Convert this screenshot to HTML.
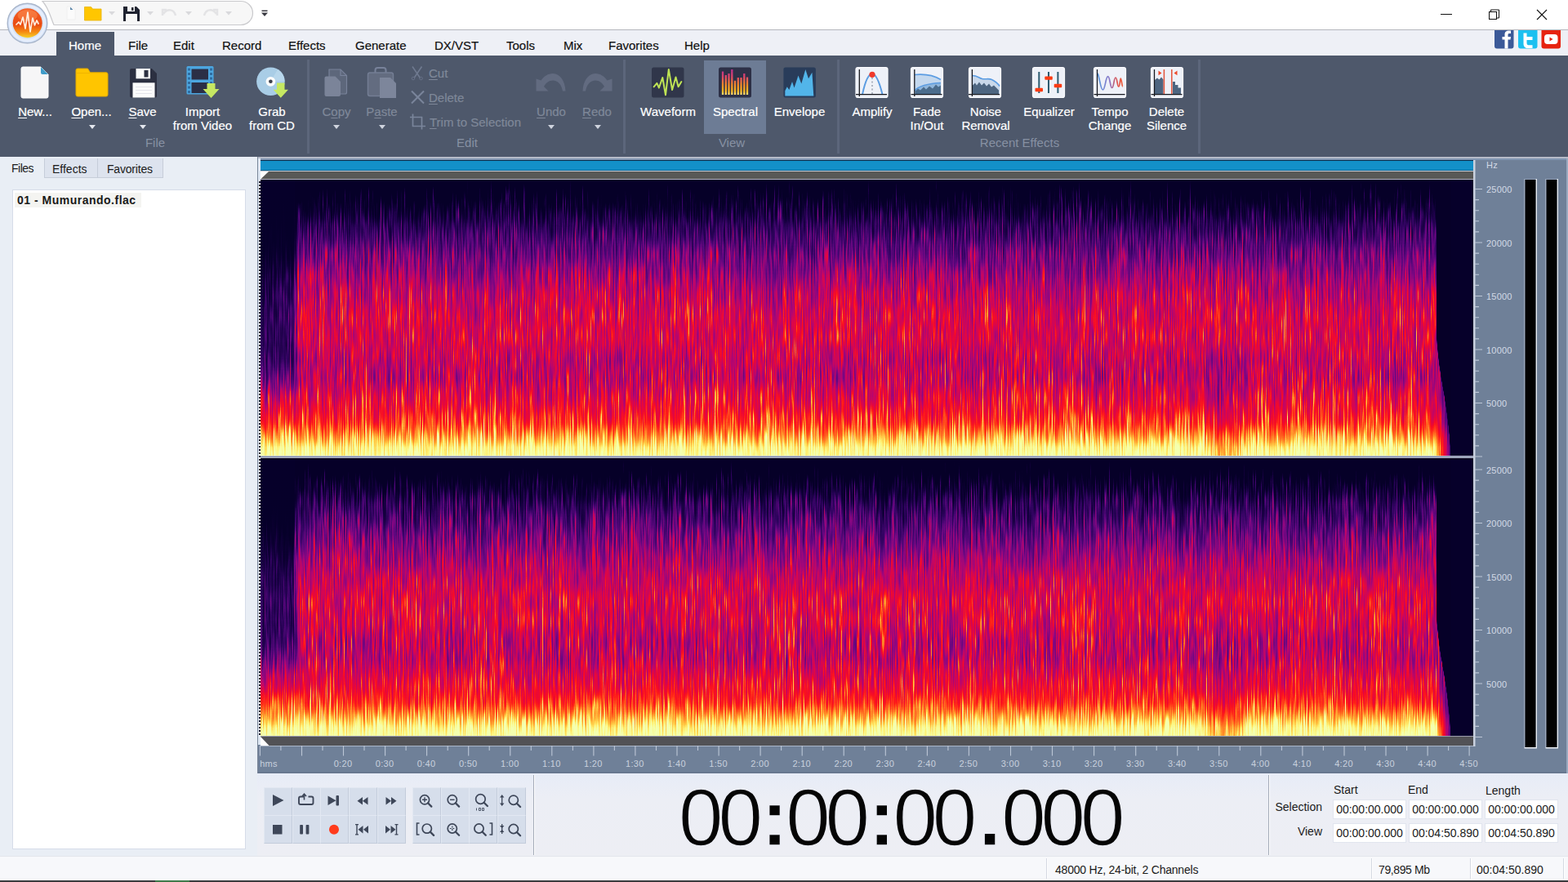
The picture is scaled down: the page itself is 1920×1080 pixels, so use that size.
<!DOCTYPE html>
<html lang="en">
<head>
<meta charset="utf-8">
<title>WavePad Sound Editor</title>
<style>
*{box-sizing:border-box;margin:0;padding:0}
html,body{width:1920px;height:1080px;overflow:hidden;background:#fff}
body{position:relative;font-family:"Liberation Sans",sans-serif;font-size:15px;color:#111}
.abs{position:absolute}
svg{position:absolute;overflow:visible}
/* title + tabs */
#titlebar{left:0;top:0;width:1920px;height:36px;background:#fff}
#titleline{left:0;top:36px;width:1920px;height:1px;background:#b4b6bc}
#tabrow{left:0;top:37px;width:1920px;height:31px;background:#eef0f6}
#hometab{left:69px;top:39px;width:71px;height:29px;background:#4e586b}
.tab{position:absolute;top:47px;-webkit-text-stroke:.2px currentColor;height:18px;line-height:18px;font-size:15px;color:#111;white-space:nowrap}
/* ribbon */
#ribbon{left:0;top:68px;width:1920px;height:124px;background:#4e586b}
.rl{position:absolute;-webkit-text-stroke:.2px currentColor;color:#fff;font-size:15px;line-height:18px;text-align:center;white-space:nowrap;transform:translateX(-50%)}
.rl.dis{color:#7f8899}
.rl u{text-decoration-thickness:1px;text-underline-offset:2px}
.grp{position:absolute;top:166px;color:#8791a3;font-size:15px;line-height:18px;white-space:nowrap;transform:translateX(-50%)}
.sep{position:absolute;top:73px;width:3px;height:115px;background:#5c667b}
.dd{position:absolute;width:0;height:0;border-left:4px solid transparent;border-right:4px solid transparent;border-top:5px solid #e4e7ee}
.dd.dis{border-top-color:#cfd4de}
/* left panel */
#leftpanel{left:0;top:192px;width:315px;height:856px;background:#e9eef5}
.ptab{position:absolute;top:194px;height:24px;background:#dde3ee;border:1px solid #c6cdd9;border-top:0}
.ptxt{position:absolute;font-size:14px;line-height:16px;color:#1a1a1a;white-space:nowrap}
#list{left:15px;top:232px;width:286px;height:808px;background:#fff;border:1px solid #d6dce8}
/* main */
#main{left:315px;top:192px;width:1605px;height:755px;background:#6f8098;border-bottom:2px solid #67778f}
.hz{position:absolute;left:1820px;font-size:11px;line-height:12px;color:#d3dae6;white-space:nowrap;letter-spacing:.2px}
.tl{position:absolute;top:929px;font-size:11px;line-height:12px;color:#c9d1de;white-space:nowrap;letter-spacing:.3px;transform:translateX(-50%)}
/* transport */
#transport{left:315px;top:947px;width:1605px;height:101px;background:linear-gradient(#e7ecf7,#eceef5 30%,#edeef4)}
.cell{position:absolute;width:35px;height:35px;background:#d6deeb;border:1px solid #c3ccdb;border-left-color:#e2e8f2;border-top-color:#e2e8f2}
#bigtime{left:831px;top:948px;width:560px;height:100px;font-size:98px;line-height:107px;color:#050505;white-space:nowrap;letter-spacing:-6.1px;-webkit-text-stroke:1.4px #ebedf5}
#bigtime .c{display:inline-block;width:34.4px;text-align:center;letter-spacing:0;font-weight:bold;position:relative;left:3.6px}
#bigtime .p{display:inline-block;width:36px;text-align:center;letter-spacing:0;font-weight:bold;position:relative;left:4px}
.tbl{position:absolute;font-size:14px;line-height:16px;color:#1a1a1a;white-space:nowrap}
.box{position:absolute;width:90px;height:24px;background:#fff;border:1px solid #e1e5ee;font-size:14px;line-height:23px;color:#1a1a1a;text-align:center;white-space:nowrap}
/* status */
#status{left:0;top:1048px;width:1920px;height:30px;background:#f7f8fb;border-top:1px solid #e3e6ec}
.st{position:absolute;top:1057px;font-size:14px;line-height:16px;color:#1a1a1a;white-space:nowrap}
.ssep{position:absolute;top:1051px;width:2px;height:25px;background:#fff;border-left:1px solid #d5d9e2}
#bottomline{left:0;top:1078px;width:1920px;height:2px;background:#3a3a3c}
</style>
</head>
<body>
<!-- ===== title bar ===== -->
<div id="titlebar" class="abs"></div>
<div id="titleline" class="abs"></div>
<div id="tabrow" class="abs"></div>
<div id="hometab" class="abs"></div>
<div class="tab" style="left:84px;color:#fff">Home</div>
<div class="tab" style="left:157px">File</div>
<div class="tab" style="left:212px">Edit</div>
<div class="tab" style="left:272px">Record</div>
<div class="tab" style="left:353px">Effects</div>
<div class="tab" style="left:435px">Generate</div>
<div class="tab" style="left:532px">DX/VST</div>
<div class="tab" style="left:620px">Tools</div>
<div class="tab" style="left:690px">Mix</div>
<div class="tab" style="left:745px">Favorites</div>
<div class="tab" style="left:838px">Help</div>
<!-- title bar icons -->
<svg width="1920" height="70" viewBox="0 0 1920 70" style="left:0;top:0">
<defs>
<radialGradient id="orb" cx="0.5" cy="0.35" r="0.75">
 <stop offset="0" stop-color="#ff8a3a"/><stop offset="0.45" stop-color="#ee4a14"/><stop offset="0.75" stop-color="#f06a10"/><stop offset="1" stop-color="#f8cc20"/>
</radialGradient>
<linearGradient id="orbg" x1="0" y1="0" x2="0" y2="1">
 <stop offset="0" stop-color="#f2622a"/><stop offset="0.55" stop-color="#ea4a12"/><stop offset="0.8" stop-color="#f58a14"/><stop offset="1" stop-color="#f6d028"/>
</linearGradient>
</defs>
<!-- quick access pill -->
<path d="M52 1.5H295a14.5 14.5 0 0 1 0 29H66C62 22 60 10 52 1.5Z" fill="#f7f7f7" stroke="#c9c9cc" stroke-width="1.2"/>
<!-- new (faint) -->
<path d="M82 8h6l4 4v12H82Z" fill="#fbfbfb" stroke="#f0f0f0"/><path d="M86 8.5l3.5 3.5h-3.5Z" fill="#5c86a8"/>
<!-- folder -->
<path d="M103.5 8.5h8l2 2.5h10.5v14h-20.500Z" fill="#ffc600" stroke="#e9b400" stroke-width=".8"/>
<path d="M133 14h8l-4 4.500Z" fill="#d9d9dc"/>
<!-- save -->
<path d="M151 8h16l4 4v14h-20Z" fill="#1e2230"/><rect x="156" y="8" width="9" height="6" fill="#f7f7f7"/><rect x="161" y="9" width="2.500" height="4" fill="#1e2230"/><rect x="154" y="17" width="14" height="9" fill="#f7f7f7"/>
<path d="M180 14h8l-4 4.500Z" fill="#d9d9dc"/>
<!-- undo / redo faint -->
<path d="M199 19v-7l5 0M200 17c5-7 13-6 15 2" fill="none" stroke="#e3e3e5" stroke-width="2.500"/>
<path d="M227 14h8l-4 4.500Z" fill="#d9d9dc"/>
<path d="M266 19v-7l-5 0M265 17c-5-7-13-6-15 2" fill="none" stroke="#e3e3e5" stroke-width="2.500"/>
<path d="M276 14h8l-4 4.500Z" fill="#d9d9dc"/>
<!-- customize -->
<rect x="320.500" y="12.500" width="7" height="1.500" fill="#3c3c44"/><path d="M320 15.500h8l-4 4.500Z" fill="#3c3c44"/>
<!-- orb -->
<circle cx="33.500" cy="28.500" r="24.300" fill="#d6e3f8" stroke="#a9b6cb" stroke-width="1.400"/>
<circle cx="33.500" cy="28.500" r="21" fill="none" stroke="#e6eefc" stroke-width="3"/>
<circle cx="33.700" cy="28.200" r="18" fill="url(#orbg)"/>
<ellipse cx="33.700" cy="19" rx="12" ry="7" fill="#ff9a5a" opacity=".45"/>
<path d="M20 30l3-3 2 3 3-9 3 14 3-20 3 24 3-17 2.500 9 2.500-6 2 4" fill="none" stroke="#fff6e8" stroke-width="1.700" stroke-linejoin="round" stroke-linecap="round" opacity=".95"/>
<!-- window buttons -->
<rect x="1764" y="17" width="14" height="1" fill="#111"/>
<rect x="1823.500" y="14.500" width="9" height="9" fill="none" stroke="#111" stroke-width="1"/>
<path d="M1825.500 14.500v-2.500h10v10h-3" fill="none" stroke="#111" stroke-width="1"/>
<path d="M1882 12l12 12M1894 12l-12 12" stroke="#111" stroke-width="1.100" fill="none"/>
<!-- social -->
<path d="M1830 37h23.500v19.500a3 3 0 0 1-3 3h-17.500a3 3 0 0 1-3-3Z" fill="#3b5998"/>
<path d="M1842.500 59.500v-11h-3v-3.500h3v-2.500c0-3.600 2-5 5-5h2.500v3.500h-1.800c-1.300 0-1.700.6-1.700 1.700v2.300h3.500l-.5 3.500h-3v11Z" fill="#fff"/>
<path d="M1859 37h23.500v19.500a3 3 0 0 1-3 3h-17.500a3 3 0 0 1-3-3Z" fill="#1cc0f0"/>
<path d="M1865.500 40.500h4v4.500h7v4h-7v3.500c0 2 1 2.800 3 2.800h4v3.700h-5.500c-3.700 0-5.500-2-5.500-5.500Z" fill="#fff"/>
<path d="M1887.500 37h23.500v19.500a3 3 0 0 1-3 3h-17.500a3 3 0 0 1-3-3Z" fill="#e62310"/>
<rect x="1891" y="42" width="16.500" height="12" rx="4" fill="#fff"/>
<path d="M1897.500 45.500l4 2.500-4 2.500Z" fill="#e62310"/>
</svg>
<!-- ===== ribbon ===== -->
<div id="ribbon" class="abs"></div>
<div class="abs" style="left:862px;top:74px;width:76px;height:90px;background:#6d7c95"></div>
<div class="sep" style="left:376px"></div>
<div class="sep" style="left:763px"></div>
<div class="sep" style="left:1025px"></div>
<div class="sep" style="left:1467px"></div>

<div class="rl" style="left:43px;top:128px"><u>N</u>ew...</div>
<div class="rl" style="left:112px;top:128px"><u>O</u>pen...</div>
<div class="rl" style="left:174.5px;top:128px"><u>S</u>ave</div>
<div class="rl" style="left:248px;top:128px;line-height:17px">Import<br>from Video</div>
<div class="rl" style="left:333px;top:128px;line-height:17px">Grab<br>from CD</div>
<div class="dd" style="left:109px;top:153px"></div>
<div class="dd" style="left:171px;top:153px"></div>
<div class="grp" style="left:190px">File</div>

<div class="rl dis" style="left:412px;top:128px">C<u>o</u>py</div>
<div class="rl dis" style="left:467.5px;top:128px">P<u>a</u>ste</div>
<div class="dd dis" style="left:408px;top:153px"></div>
<div class="dd dis" style="left:464px;top:153px"></div>
<div class="rl dis" style="left:525px;top:81px;transform:none"><u>C</u>ut</div>
<div class="rl dis" style="left:525px;top:111px;transform:none"><u>D</u>elete</div>
<div class="rl dis" style="left:526px;top:141px;transform:none"><u>T</u>rim to Selection</div>
<div class="rl dis" style="left:675px;top:128px"><u>U</u>ndo</div>
<div class="rl dis" style="left:731px;top:128px"><u>R</u>edo</div>
<div class="dd dis" style="left:671px;top:153px"></div>
<div class="dd dis" style="left:728px;top:153px"></div>
<div class="grp" style="left:572px">Edit</div>

<div class="rl" style="left:818px;top:128px">Waveform</div>
<div class="rl" style="left:900.5px;top:128px">Spectral</div>
<div class="rl" style="left:979px;top:128px">Envelope</div>
<div class="grp" style="left:896px">View</div>

<div class="rl" style="left:1068px;top:128px">Amplify</div>
<div class="rl" style="left:1135px;top:128px;line-height:17px">Fade<br>In/Out</div>
<div class="rl" style="left:1207px;top:128px;line-height:17px">Noise<br>Removal</div>
<div class="rl" style="left:1284.5px;top:128px">Equalizer</div>
<div class="rl" style="left:1359px;top:128px;line-height:17px">Tempo<br>Change</div>
<div class="rl" style="left:1428.5px;top:128px;line-height:17px">Delete<br>Silence</div>
<div class="grp" style="left:1248.5px">Recent Effects</div>
<!-- ribbon icons -->
<svg width="1920" height="124" viewBox="0 68 1920 124" style="left:0;top:68px">
<defs>
<linearGradient id="barg" x1="0" y1="85" x2="0" y2="116" gradientUnits="userSpaceOnUse">
 <stop offset="0" stop-color="#b92f8f"/><stop offset="0.3" stop-color="#e04868"/><stop offset="0.6" stop-color="#f58a2a"/><stop offset="0.85" stop-color="#fdb81e"/><stop offset="1" stop-color="#ffe47a"/>
</linearGradient>
<linearGradient id="tempog" x1="1344" y1="0" x2="1376" y2="0" gradientUnits="userSpaceOnUse">
 <stop offset="0" stop-color="#5a9be0"/><stop offset="0.45" stop-color="#8a78c8"/><stop offset="0.75" stop-color="#e0504a"/><stop offset="1" stop-color="#f0643c"/>
</linearGradient>
</defs>
<!-- New -->
<path d="M28 82h22l9 9v27a2 2 0 0 1-2 2H28a2 2 0 0 1-2-2V84a2 2 0 0 1 2-2Z" fill="#f6f6f7" stroke="#fff" stroke-width="1"/>
<path d="M50 82l9 9h-7a2 2 0 0 1-2-2Z" fill="#3f9cc9"/>
<!-- Open -->
<path d="M95 84h12.500l3 4.800H130a2 2 0 0 1 2 2V116a2 2 0 0 1-2 2H95a2 2 0 0 1-2-2V86a2 2 0 0 1 2-2Z" fill="#ffc500" stroke="#e2a900" stroke-width="1"/>
<path d="M94 89.500h16" stroke="#f0b400" stroke-width="1" fill="none"/>
<!-- Save -->
<path d="M161 84h25l6 6v27.500a2 2 0 0 1-2 2H161a2 2 0 0 1-2-2V86a2 2 0 0 1 2-2Z" fill="#2c3041"/>
<rect x="166.500" y="84" width="17.500" height="12.300" fill="#fbfbfb"/><rect x="176.500" y="86" width="5" height="8.500" fill="#2c3041"/>
<rect x="162.500" y="101.300" width="27" height="18.200" fill="#fbfbfb"/>
<path d="M166 106.500h20M166 110.500h20M166 114.500h20" stroke="#e4e4ea" stroke-width="1"/>
<!-- Import from video -->
<rect x="228.500" y="81" width="33" height="34.500" rx="1.500" fill="#4ca6e0"/>
<rect x="234.500" y="84.500" width="20.500" height="13" fill="#2b2f46"/><rect x="234.500" y="101" width="20.500" height="13" fill="#2b2f46"/>
<g fill="#2f6ea3"><rect x="230" y="83.500" width="3" height="3"/><rect x="230" y="89" width="3" height="3"/><rect x="230" y="94.500" width="3" height="3"/><rect x="230" y="100" width="3" height="3"/><rect x="230" y="105.500" width="3" height="3"/><rect x="230" y="111" width="3" height="3"/>
<rect x="257" y="83.500" width="3" height="3"/><rect x="257" y="89" width="3" height="3"/><rect x="257" y="94.500" width="3" height="3"/><rect x="257" y="100" width="3" height="3"/></g>
<path d="M253.500 102h10v7h5l-10 11-10-11h5Z" fill="#c6e862"/>
<!-- Grab from CD -->
<circle cx="331.400" cy="99.800" r="17.300" fill="#a9cde6"/>
<path d="M331.400 99.800L348.700 99.800A17.300 17.300 0 0 0 340 85Z" fill="#bcd9ee" opacity=".8"/>
<circle cx="331.400" cy="99.800" r="5.900" fill="#fdfdfd"/><circle cx="331.400" cy="99.800" r="2.300" fill="#3b3f4c"/>
<path d="M339 101.500h9.500v8.300h4.500l-9.200 10-9.200-10h4.400Z" fill="#c6e862"/>
<!-- Copy (disabled) -->
<path d="M403 85h14l7.500 7.500v20.500a2 2 0 0 1-2 2H403Z" fill="#5d677b" stroke="#78829a" stroke-width="1.200"/>
<path d="M417 85v7.500h7.500" fill="none" stroke="#78829a" stroke-width="1.200"/>
<path d="M399.500 93.500h11l6.500 6.500v16a2 2 0 0 1-2 2h-15.500a2 2 0 0 1-2-2V95.500a2 2 0 0 1 2-2Z" fill="#7b8499"/>
<!-- Paste (disabled) -->
<path d="M459.500 89v-3a3 3 0 0 1 3-3h7a3 3 0 0 1 3 3v3" fill="none" stroke="#78829a" stroke-width="2"/>
<rect x="450.500" y="89" width="31" height="28.500" rx="2.500" fill="#636c80" stroke="#747e94" stroke-width="1.400"/>
<path d="M465 95h13l7 7v18h-20Z" fill="#7d869b"/>
<!-- Cut -->
<path d="M505 81.500l9.500 14M516.500 81.500l-9.500 14" stroke="#6f7a90" stroke-width="1.600" fill="none"/>
<circle cx="506" cy="96" r="1.800" fill="none" stroke="#667087" stroke-width="1"/><circle cx="515.500" cy="96" r="1.800" fill="none" stroke="#667087" stroke-width="1"/>
<!-- Delete -->
<path d="M504 111.500l15 15M519 111.500l-15 15" stroke="#7a859b" stroke-width="2" fill="none"/>
<!-- Trim -->
<path d="M505.500 139.500v15h15.500M502 143.500h14.500v15" stroke="#7a859b" stroke-width="1.700" fill="none"/>
<!-- Undo / Redo -->
<g fill="#636d82">
<path d="M656.500 96.500v15h15l-5.500-5.500c2-4 6-7.500 11-7.500 6 0 10.500 5 12 13h3.500c-.5-12-6.500-21.500-15.500-21.500-6 0-11 3.500-14.500 8.500Z" opacity=".95"/>
<path d="M749.500 96.500v15h-15l5.500-5.500c-2-4-6-7.500-11-7.500-6 0-10.500 5-12 13h-3.500c.5-12 6.500-21.500 15.500-21.500 6 0 11 3.500 14.500 8.500Z" opacity=".95"/>
</g>
<!-- Waveform -->
<rect x="798" y="82.500" width="39.500" height="37" rx="2.500" fill="#30364a"/>
<path d="M800.600 106.300l3.800-4.400 2.500 5.600 4.400-12.500 3.700 21.300 3.800-31.300 4.300 25 4.400-15.600 3.100 11.900 3.800-6.300" fill="none" stroke="#bfe455" stroke-width="2" stroke-linejoin="round" stroke-linecap="round"/>
<!-- Spectral -->
<rect x="880" y="82.500" width="40" height="37" rx="2.500" fill="#2d3047"/>
<path d="M885 87.500V116M888.800 92V116M892.500 90V116M896.300 85V116M900 98.800V116M903.800 95V116M907.500 95V116M911.300 90V116M915 94.400V116" stroke="url(#barg)" stroke-width="2.300" fill="none"/>
<!-- Envelope -->
<rect x="959.400" y="82.500" width="39.500" height="37" rx="2.500" fill="#293c5a"/>
<path d="M961.300 117.500v-6.300l2.500-5 2.500 3.800 3.700-10 2.500 7.500 5-15 3.800 10 5-17.500 3.700 11.300 4.400-7.500 1.900 28.700Z" fill="#52b5ea"/>
<!-- effect tiles -->
<g fill="#eef1f8" stroke="#fbfcff" stroke-width="1.200">
<rect x="1048" y="82.500" width="39" height="37" rx="2.500"/><rect x="1115.500" y="82.500" width="39" height="37" rx="2.500"/><rect x="1186.500" y="82.500" width="39" height="37" rx="2.500"/><rect x="1264.500" y="82.500" width="39" height="37" rx="2.500"/><rect x="1339.500" y="82.500" width="39" height="37" rx="2.500"/><rect x="1409.500" y="82.500" width="39" height="37" rx="2.500"/>
</g>
<!-- Amplify -->
<path d="M1056 115.500c3-14 7-25 12-25s9 11 12.500 25" fill="none" stroke="#5b9ce2" stroke-width="2"/>
<path d="M1068 95v20" stroke="#9aa3b0" stroke-width="1.500" stroke-dasharray="2 2.500" fill="none"/>
<circle cx="1068" cy="91.300" r="3.600" fill="#f0392b"/>
<path d="M1052.300 85v33M1048 115.600h38" stroke="#16181e" stroke-width="1.300" fill="none"/>
<!-- Fade -->
<path d="M1120 92c10-1 22 0 32 6v17.500h-32Z" fill="#c4d8ee"/>
<path d="M1120 111c4-5 16-9 32-9.500v14h-32Z" fill="#8fb6dc"/>
<path d="M1121 115.500v-4l3-3 3 2 4-4 3 3 4-4 4 3 4-5 3 3 3-2v11Z" fill="#4b6c8c"/>
<path d="M1120 91.500c10-1 22 0 32 6M1120 111c4-5 16-9 32-9.500" fill="none" stroke="#5b9ce2" stroke-width="1.600"/>
<path d="M1119.800 85v33M1115.500 115.600h38" stroke="#16181e" stroke-width="1.300" fill="none"/>
<!-- Noise removal -->
<path d="M1190.500 92.500c6 0 8 3 12 4s8-1 12 1 7 4 9.500 8v10h-33.500Z" fill="#c9d8ea"/>
<path d="M1191 115.500v-11l3-3 2 3 3-4 3 4 3-3 3 4 3-3 3 4 3-2 3 3 3 3v5.500Z" fill="#4d6580"/>
<path d="M1190.500 92.500c6 0 8 3 12 4s8-1 12 1 7 4 9.500 8" fill="none" stroke="#5b9ce2" stroke-width="1.600"/>
<path d="M1190.400 85v33M1186 115.600h38" stroke="#16181e" stroke-width="1.300" fill="none"/>
<!-- Equalizer -->
<path d="M1272.300 88v26M1284 88v26M1295.400 88v26" stroke="#2d5b70" stroke-width="2" fill="none"/>
<g fill="#fb3b12"><rect x="1267.500" y="107.800" width="9.500" height="4.400" rx="1"/><rect x="1279.300" y="93.400" width="9.500" height="4.400" rx="1"/><rect x="1290.700" y="102.800" width="9.500" height="4.400" rx="1"/></g>
<!-- Tempo -->
<path d="M1344 90c2.500 4 3.500 20 6.400 20s3.500-16.300 6.200-16.300 2.700 13.800 5 13.800 2.300-12.500 4.400-12.500 2 11 3.800 11 1.500-10 2.500-10 1.500 10 2.500 10" fill="none" stroke="url(#tempog)" stroke-width="1.700"/>
<path d="M1343.500 85v33M1339.500 115.600h38" stroke="#16181e" stroke-width="1.300" fill="none"/>
<!-- Delete silence -->
<path d="M1414 115.500V98l3-2.500 2.500 2 2.500-3 2.500 3v18Z" fill="#4d6580"/>
<path d="M1436 115.500V100h3v4h3.500v3.500H1446v8Z" fill="#4d6580"/>
<path d="M1425.400 85v30.500M1434.800 85v30.500" stroke="#e2543c" stroke-width="1.500" fill="none"/>
<path d="M1418.500 86.500l4 2.900-4 2.900ZM1441.500 86.500l-4 2.900 4 2.900Z" fill="#ee4a2a"/>
<path d="M1413.500 85v33M1409.500 115.600h38" stroke="#16181e" stroke-width="1.300" fill="none"/>
</svg>
<!-- ===== left panel ===== -->
<div id="leftpanel" class="abs"></div>
<div class="ptab" style="left:54px;width:66px"></div>
<div class="ptab" style="left:119px;width:81px"></div>
<div class="ptxt" style="left:14px;top:198px;letter-spacing:-.5px">Files</div>
<div class="ptxt" style="left:64px;top:199px">Effects</div>
<div class="ptxt" style="left:131px;top:199px;letter-spacing:-.2px">Favorites</div>
<div id="list" class="abs"></div>
<div class="abs" style="left:18px;top:236px;width:155px;height:18px;background:#f4f4f1"></div>
<div class="ptxt" style="left:21px;top:237px;font-weight:bold;font-size:14px;letter-spacing:.5px">01 - Mumurando.flac</div>
<!-- ===== main wave area ===== -->
<div id="main" class="abs"></div>
<div class="abs" style="left:0;top:192px;width:1920px;height:2px;background:#b6bbc8"></div>
<div class="abs" style="left:0;top:192px;width:315px;height:2px;background:#e9eef5"></div>
<div class="abs" style="left:315px;top:194px;width:1605px;height:2px;background:#8196b2"></div>
<div class="abs" style="left:1918px;top:194px;width:2px;height:754px;background:#9aaac0"></div>
<div class="abs" style="left:315px;top:192px;width:1px;height:756px;background:#7a8699"></div>
<div class="abs" style="left:316px;top:194px;width:3px;height:718px;background:#dfe8f4"></div>
<div class="abs" style="left:319px;top:196px;width:1485px;height:13px;background:#1390c9;border-top:1px solid #042c4e;border-bottom:1px solid #0b6797"></div>
<div class="abs" style="left:319px;top:209px;width:1485px;height:11px;background:#585856;border-top:1px solid #c6c8d0;border-bottom:1px solid #b4b6c2"></div>
<div class="abs" style="left:319px;top:901px;width:1485px;height:12px;background:#525256;border-top:1px solid #9a9cac"></div>
<div class="abs" style="left:317px;top:220px;width:2px;height:681px;background:repeating-linear-gradient(#fff 0 2px,#1a1a2a 2px 4px)"></div>
<svg width="1485" height="681" viewBox="319 220 1485 681" style="left:319px;top:220px;overflow:hidden">
<defs>
<linearGradient id="vp" x1="0" y1="0" x2="0" y2="1">
<stop offset="0.0" stop-color="#008000"/>
<stop offset="0.04" stop-color="#1f7d00"/>
<stop offset="0.09" stop-color="#3f7b00"/>
<stop offset="0.16" stop-color="#5c7700"/>
<stop offset="0.2" stop-color="#677500"/>
<stop offset="0.25" stop-color="#747500"/>
<stop offset="0.33" stop-color="#877500"/>
<stop offset="0.35" stop-color="#8c7500"/>
<stop offset="0.41" stop-color="#997d00"/>
<stop offset="0.5" stop-color="#a58a00"/>
<stop offset="0.58" stop-color="#a58c00"/>
<stop offset="0.66" stop-color="#998d00"/>
<stop offset="0.72" stop-color="#998f00"/>
<stop offset="0.78" stop-color="#a78800"/>
<stop offset="0.84" stop-color="#b48100"/>
<stop offset="0.85" stop-color="#b88000"/>
<stop offset="0.88" stop-color="#c27900"/>
<stop offset="0.91" stop-color="#d47200"/>
<stop offset="0.94" stop-color="#e76b00"/>
<stop offset="0.97" stop-color="#f95c00"/>
<stop offset="1.0" stop-color="#ff4c00"/>
</linearGradient>
<linearGradient id="fin" x1="0" y1="0" x2="0" y2="1"><stop offset="0" stop-color="#000" stop-opacity=".45"/><stop offset="0.6" stop-color="#000" stop-opacity=".42"/><stop offset="0.7" stop-color="#000" stop-opacity=".26"/><stop offset="0.78" stop-color="#000" stop-opacity=".1"/><stop offset="0.86" stop-color="#000" stop-opacity="0"/></linearGradient>
<linearGradient id="ftop" x1="0" y1="0" x2="0" y2="1"><stop offset="0" stop-color="#06002a" stop-opacity="1"/><stop offset="0.6" stop-color="#06002a" stop-opacity=".85"/><stop offset="1" stop-color="#06002a" stop-opacity="0"/></linearGradient>
<linearGradient id="fout" x1="0" y1="0" x2="1" y2="0"><stop offset="0" stop-color="#000" stop-opacity=".05"/><stop offset="0.5" stop-color="#000" stop-opacity=".28"/><stop offset="1" stop-color="#000" stop-opacity=".6"/></linearGradient>
<radialGradient id="dip" cx="0.5" cy="0.5" r="0.5"><stop offset="0" stop-color="#000" stop-opacity=".12"/><stop offset="0.5" stop-color="#000" stop-opacity=".08"/><stop offset="1" stop-color="#000" stop-opacity="0"/></radialGradient>
<filter id="spec" filterUnits="userSpaceOnUse" x="319" y="220" width="1485" height="681" color-interpolation-filters="sRGB">
 <feTurbulence type="fractalNoise" baseFrequency="0.7 0.007" numOctaves="2" seed="7" result="n1"/>
 <feColorMatrix in="n1" type="matrix" values="1 0 0 0 0  1 0 0 0 0  1 0 0 0 0  0 0 0 0 1" result="g1"/>
 <feTurbulence type="fractalNoise" baseFrequency="0.05 0.010" numOctaves="2" seed="23" result="n2"/>
 <feColorMatrix in="n2" type="matrix" values="0 1 0 0 0  0 1 0 0 0  0 1 0 0 0  0 0 0 0 1" result="g2"/>
 <feTurbulence type="fractalNoise" baseFrequency="0.65 0.04" numOctaves="1" seed="41" result="n3"/>
 <feColorMatrix in="n3" type="matrix" values="0 0 1 0 0  0 0 1 0 0  0 0 1 0 0  0 0 0 0 1" result="g3"/>
 <feComposite in="g1" in2="g2" operator="arithmetic" k1="0" k2="0.46" k3="0.12" k4="0" result="g12"/>
 <feComposite in="g12" in2="g3" operator="arithmetic" k1="0" k2="1" k3="0.42" k4="0" result="g0"/>
 <feComponentTransfer in="g0" result="g"><feFuncR type="gamma" amplitude="3.2" exponent="3.0" offset="0"/><feFuncG type="gamma" amplitude="3.2" exponent="3.0" offset="0"/><feFuncB type="gamma" amplitude="3.2" exponent="3.0" offset="0"/></feComponentTransfer>
 <feColorMatrix in="SourceGraphic" type="matrix" values="1 0 0 0 0  1 0 0 0 0  1 0 0 0 0  0 0 0 0 1" result="base"/>
 <feColorMatrix in="SourceGraphic" type="matrix" values="0 1 0 0 0  0 1 0 0 0  0 1 0 0 0  0 0 0 0 1" result="amp"/>
 <feComposite in="amp" in2="g" operator="arithmetic" k1="1" k2="-0.4200" k3="0" k4="0.5" result="t"/>
 <feComposite in="base" in2="t" operator="arithmetic" k1="0" k2="1.3000" k3="1" k4="-0.8000" result="sum"/>
 <feComponentTransfer in="sum">
  <feFuncR type="table" tableValues="0.024 0.037 0.051 0.065 0.078 0.110 0.141 0.173 0.204 0.247 0.290 0.333 0.376 0.430 0.484 0.538 0.594 0.650 0.707 0.757 0.804 0.850 0.892 0.925 0.959 0.979 0.991 1.000 1.000 1.000 1.000 1.000 1.000 1.000 1.000 1.000 1.000 1.000 0.993 0.975 0.957"/>
  <feFuncG type="table" tableValues="0.000 0.000 0.000 0.000 0.000 0.004 0.008 0.012 0.016 0.020 0.024 0.027 0.031 0.031 0.031 0.031 0.029 0.027 0.025 0.024 0.024 0.024 0.027 0.035 0.044 0.069 0.105 0.147 0.217 0.287 0.361 0.439 0.518 0.599 0.683 0.768 0.842 0.914 0.964 0.982 1.000"/>
  <feFuncB type="table" tableValues="0.157 0.178 0.200 0.222 0.243 0.280 0.318 0.355 0.392 0.420 0.447 0.475 0.502 0.504 0.507 0.509 0.490 0.466 0.441 0.402 0.353 0.304 0.255 0.208 0.160 0.129 0.110 0.095 0.101 0.106 0.117 0.133 0.150 0.179 0.215 0.252 0.327 0.412 0.501 0.595 0.690"/>
 </feComponentTransfer>
</filter>
</defs>
<g filter="url(#spec)">
<rect x="319" y="220" width="1485" height="681" fill="#000"/>
<rect x="319" y="220" width="1485" height="338" fill="url(#vp)"/>
<rect x="319" y="220" width="41" height="338" fill="url(#fin)"/>
<rect x="360" y="220" width="4" height="338" fill="url(#fin)" opacity=".5"/>
<rect x="1759" y="389" width="18" height="170" fill="url(#fout)"/>
<path d="M1759 220H1804V558H1776.5C1776 536 1773 510 1768 480C1764 458 1760 433 1759 406Z" fill="#000"/>
<ellipse cx="1501" cy="524" rx="30" ry="135" fill="url(#dip)"/>
<rect x="319" y="563" width="1485" height="338" fill="url(#vp)"/>
<rect x="319" y="563" width="41" height="338" fill="url(#fin)"/>
<rect x="360" y="563" width="4" height="338" fill="url(#fin)" opacity=".5"/>
<rect x="1759" y="732" width="18" height="170" fill="url(#fout)"/>
<path d="M1759 563H1804V901H1776.5C1776 879 1773 853 1768 823C1764 801 1760 776 1759 749Z" fill="#000"/>
<ellipse cx="1501" cy="867" rx="30" ry="135" fill="url(#dip)"/>
</g>
<rect x="1777" y="220" width="27" height="338" fill="#06002a"/>
<rect x="319" y="220" width="42" height="122" fill="url(#ftop)"/>
<rect x="1777" y="563" width="27" height="338" fill="#06002a"/>
<rect x="319" y="563" width="42" height="122" fill="url(#ftop)"/>
</svg>
<div class="abs" style="left:319px;top:558px;width:1485px;height:5px;background:#7d8ba3;border-top:1px solid #b9bdd0;border-bottom:2px solid #0a0620"></div>
<div class="abs" style="left:319px;top:560px;width:1485px;height:1px;background:#b9bdd0"></div>
<svg width="1605" height="756" viewBox="315 192 1605 756" style="left:315px;top:192px">
<path d="M319 210h10l-10 9.500Z" fill="#fff"/>
<path d="M319 902l10.500 11h-10.500Z" fill="#fff"/>
<rect x="1804" y="196" width="2.500" height="718" fill="#c9d1de"/>
<path d="M1806 559.0h9M1806 545.9h5M1806 532.8h5M1806 519.7h5M1806 506.6h5M1806 493.5h9M1806 480.4h5M1806 467.3h5M1806 454.2h5M1806 441.1h5M1806 428.0h9M1806 414.9h5M1806 401.8h5M1806 388.7h5M1806 375.6h5M1806 362.5h9M1806 349.4h5M1806 336.3h5M1806 323.2h5M1806 310.1h5M1806 297.0h9M1806 283.9h5M1806 270.8h5M1806 257.7h5M1806 244.6h5M1806 231.5h9M1806 902.5h9M1806 889.4h5M1806 876.3h5M1806 863.2h5M1806 850.1h5M1806 837.0h9M1806 823.9h5M1806 810.8h5M1806 797.7h5M1806 784.6h5M1806 771.5h9M1806 758.4h5M1806 745.3h5M1806 732.2h5M1806 719.1h5M1806 706.0h9M1806 692.9h5M1806 679.8h5M1806 666.7h5M1806 653.6h5M1806 640.5h9M1806 627.4h5M1806 614.3h5M1806 601.2h5M1806 588.1h5M1806 575.0h9" stroke="#bcc6d6" stroke-width="1.100" fill="none"/>
<path d="M319 913.500h1485" stroke="#a9b4c6" stroke-width="1" fill="none"/>
<path d="M318.4 913v12.5M343.9 913v6M369.5 913v12.5M395.0 913v6M420.5 913v12.5M446.0 913v6M471.6 913v12.5M497.1 913v6M522.6 913v12.5M548.2 913v6M573.7 913v12.5M599.2 913v6M624.8 913v12.5M650.3 913v6M675.8 913v12.5M701.4 913v6M726.9 913v12.5M752.4 913v6M777.9 913v12.5M803.5 913v6M829.0 913v12.5M854.5 913v6M880.1 913v12.5M905.6 913v6M931.1 913v12.5M956.6 913v6M982.2 913v12.5M1007.7 913v6M1033.2 913v12.5M1058.8 913v6M1084.3 913v12.5M1109.8 913v6M1135.4 913v12.5M1160.9 913v6M1186.4 913v12.5M1212.0 913v6M1237.5 913v12.5M1263.0 913v6M1288.5 913v12.5M1314.1 913v6M1339.6 913v12.5M1365.1 913v6M1390.7 913v12.5M1416.2 913v6M1441.7 913v12.5M1467.2 913v6M1492.8 913v12.5M1518.3 913v6M1543.8 913v12.5M1569.4 913v6M1594.9 913v12.5M1620.4 913v6M1646.0 913v12.5M1671.5 913v6M1697.0 913v12.5M1722.6 913v6M1748.1 913v12.5M1773.6 913v6M1799.1 913v12.5" stroke="#bcc6d6" stroke-width="1.100" fill="none"/>
<rect x="1866.5" y="219" width="15.500" height="697.500" fill="#e9edf3"/>
<rect x="1866.5" y="219" width="14" height="696" fill="#8e9db5"/>
<rect x="1867.5" y="220" width="13" height="695" fill="#020202"/>
<rect x="1892.5" y="219" width="15.500" height="697.500" fill="#e9edf3"/>
<rect x="1892.5" y="219" width="14" height="696" fill="#8e9db5"/>
<rect x="1893.5" y="220" width="13" height="695" fill="#020202"/>
</svg>
<div class="hz" style="top:196px;left:1820px">Hz</div>
<div class="hz" style="top:488.0px">5000</div>
<div class="hz" style="top:422.5px">10000</div>
<div class="hz" style="top:357.0px">15000</div>
<div class="hz" style="top:291.5px">20000</div>
<div class="hz" style="top:226.0px">25000</div>
<div class="hz" style="top:831.5px">5000</div>
<div class="hz" style="top:766.0px">10000</div>
<div class="hz" style="top:700.5px">15000</div>
<div class="hz" style="top:635.0px">20000</div>
<div class="hz" style="top:569.5px">25000</div>
<div class="tl" style="left:329px">hms</div>
<div class="tl" style="left:420.0px">0:20</div>
<div class="tl" style="left:471.1px">0:30</div>
<div class="tl" style="left:522.1px">0:40</div>
<div class="tl" style="left:573.2px">0:50</div>
<div class="tl" style="left:624.3px">1:00</div>
<div class="tl" style="left:675.3px">1:10</div>
<div class="tl" style="left:726.4px">1:20</div>
<div class="tl" style="left:777.4px">1:30</div>
<div class="tl" style="left:828.5px">1:40</div>
<div class="tl" style="left:879.6px">1:50</div>
<div class="tl" style="left:930.6px">2:00</div>
<div class="tl" style="left:981.7px">2:10</div>
<div class="tl" style="left:1032.7px">2:20</div>
<div class="tl" style="left:1083.8px">2:30</div>
<div class="tl" style="left:1134.9px">2:40</div>
<div class="tl" style="left:1185.9px">2:50</div>
<div class="tl" style="left:1237.0px">3:00</div>
<div class="tl" style="left:1288.0px">3:10</div>
<div class="tl" style="left:1339.1px">3:20</div>
<div class="tl" style="left:1390.2px">3:30</div>
<div class="tl" style="left:1441.2px">3:40</div>
<div class="tl" style="left:1492.3px">3:50</div>
<div class="tl" style="left:1543.3px">4:00</div>
<div class="tl" style="left:1594.4px">4:10</div>
<div class="tl" style="left:1645.5px">4:20</div>
<div class="tl" style="left:1696.5px">4:30</div>
<div class="tl" style="left:1747.6px">4:40</div>
<div class="tl" style="left:1798.6px">4:50</div>
<!-- ===== transport ===== -->
<div id="transport" class="abs"></div>
<div class="abs" style="left:653px;top:949px;width:2px;height:98px;background:#fff;border-left:1px solid #a4abb8"></div>
<div class="abs" style="left:1553px;top:949px;width:2px;height:98px;background:#fff;border-left:1px solid #a4abb8"></div>
<div id="bigtime" class="abs"><span>00</span><span class="c">:</span><span>00</span><span class="c">:</span><span>00</span><span class="p">.</span><span>000</span></div>
<div class="tbl" style="left:1633px;top:959px">Start</div>
<div class="tbl" style="left:1724px;top:959px">End</div>
<div class="tbl" style="left:1819px;top:960px">Length</div>
<div class="tbl" style="left:1519px;width:100px;text-align:right;top:980px">Selection</div>
<div class="tbl" style="left:1519px;width:100px;text-align:right;top:1010px">View</div>
<div class="box" style="left:1632px;top:979px">00:00:00.000</div>
<div class="box" style="left:1725px;top:979px">00:00:00.000</div>
<div class="box" style="left:1818px;top:979px">00:00:00.000</div>
<div class="box" style="left:1632px;top:1008px">00:00:00.000</div>
<div class="box" style="left:1725px;top:1008px">00:04:50.890</div>
<div class="box" style="left:1818px;top:1008px">00:04:50.890</div>
<!-- ===== status bar ===== -->
<div id="status" class="abs"></div>
<div class="ssep" style="left:1281px"></div>
<div class="ssep" style="left:1679px"></div>
<div class="ssep" style="left:1800px"></div>
<div class="ssep" style="left:1914px"></div>
<div class="st" style="left:1292px;letter-spacing:-.22px">48000 Hz, 24-bit, 2 Channels</div>
<div class="st" style="left:1688px;letter-spacing:-.4px">79,895 Mb</div>
<div class="st" style="left:1808px">00:04:50.890</div>
<div id="bottomline" class="abs"></div>
<div class="abs" style="left:190px;top:1078px;width:42px;height:2px;background:#3f7a4a"></div>
<!-- transport buttons -->
<div class="cell" style="left:322.8px;top:963.8px"></div>
<div class="cell" style="left:357.5px;top:963.8px"></div>
<div class="cell" style="left:392.3px;top:963.8px"></div>
<div class="cell" style="left:427.1px;top:963.8px"></div>
<div class="cell" style="left:461.8px;top:963.8px"></div>
<div class="cell" style="left:505.0px;top:963.8px"></div>
<div class="cell" style="left:539.7px;top:963.8px"></div>
<div class="cell" style="left:574.4px;top:963.8px"></div>
<div class="cell" style="left:609.1px;top:963.8px"></div>
<div class="cell" style="left:322.8px;top:998.2px"></div>
<div class="cell" style="left:357.5px;top:998.2px"></div>
<div class="cell" style="left:392.3px;top:998.2px"></div>
<div class="cell" style="left:427.1px;top:998.2px"></div>
<div class="cell" style="left:461.8px;top:998.2px"></div>
<div class="cell" style="left:505.0px;top:998.2px"></div>
<div class="cell" style="left:539.7px;top:998.2px"></div>
<div class="cell" style="left:574.4px;top:998.2px"></div>
<div class="cell" style="left:609.1px;top:998.2px"></div>
<!-- transport icons -->
<svg width="340" height="80" viewBox="315 955 340 80" style="left:315px;top:955px">
<g fill="#3e4759" stroke="none">
<path d="M334 973l13.500 7-13.500 7Z"/>
<path d="M401.500 974.500l10 5.800-10 5.800Z"/><rect x="411.500" y="974" width="3.500" height="12.500" rx="1"/>
<path d="M444 976v9.500l-6.500-4.750ZM450.500 976v9.500l-6.500-4.750Z"/>
<path d="M472.500 976v9.500l6.500-4.750ZM479 976v9.500l6.500-4.750Z"/>
<rect x="334" y="1010" width="11.500" height="11.500"/>
<rect x="367.200" y="1010" width="3.800" height="11.500" rx=".8"/><rect x="374.600" y="1010" width="3.800" height="11.500" rx=".8"/>
<path d="M444.500 1011v9.500l-6-4.750ZM451 1011v9.500l-6-4.750Z"/><path d="M435 1009h4v1.300h-1.300v11h1.300v1.300h-4v-1.300h1.300v-11h-1.300Z"/>
<path d="M472 1011v9.500l6-4.750ZM478.500 1011v9.500l6-4.750Z"/><path d="M483.500 1009h4v1.300h-1.300v11h1.300v1.300h-4v-1.300h1.300v-11h-1.300Z"/>
</g>
<circle cx="409" cy="1015.700" r="6" fill="#ff3b1c"/>
<path d="M372 975.500h-4a2 2 0 0 0-2 2v5.500a2 2 0 0 0 2 2h13.500a2 2 0 0 0 2-2v-5.500a2 2 0 0 0-2-2h-4" fill="none" stroke="#3e4759" stroke-width="1.900"/>
<path d="M372.500 979.500v-6.500M370 975l2.500-2.800 2.500 2.800" fill="none" stroke="#3e4759" stroke-width="1.600"/>
<circle cx="520" cy="979.3" r="5.6" fill="none" stroke="#3e4759" stroke-width="1.700"/><path d="M524.0 983.3l4.300 4.300" stroke="#3e4759" stroke-width="2.300" stroke-linecap="round" fill="none"/><path d="M517 979.300h6M520 976.300v6" stroke="#3e4759" stroke-width="1.400" fill="none"/>
<circle cx="553.8" cy="979.3" r="5.6" fill="none" stroke="#3e4759" stroke-width="1.700"/><path d="M557.8 983.3l4.300 4.300" stroke="#3e4759" stroke-width="2.300" stroke-linecap="round" fill="none"/><path d="M551 979.300h5.600" stroke="#3e4759" stroke-width="1.400" fill="none"/>
<circle cx="588.4" cy="978.5" r="5.8" fill="none" stroke="#3e4759" stroke-width="1.700"/><path d="M592.6 982.7l4.300 4.300" stroke="#3e4759" stroke-width="2.300" stroke-linecap="round" fill="none"/><path d="M583.500 989.500v3M586.500 989.500h2v3h-2ZM590.500 989.500h2v3h-2Z" stroke="#3e4759" stroke-width=".9" fill="none"/>
<circle cx="628.8" cy="979.7" r="5.6" fill="none" stroke="#3e4759" stroke-width="1.700"/><path d="M632.8 983.7l4.300 4.300" stroke="#3e4759" stroke-width="2.300" stroke-linecap="round" fill="none"/><path d="M614.700 974.500v11" stroke="#3e4759" stroke-width="1.300" fill="none"/><path d="M612 976.500l2.700-3.500 2.700 3.500ZM612 983.500l2.700 3.500 2.700-3.500Z" fill="#3e4759"/>
<circle cx="522.8" cy="1014.6" r="5.6" fill="none" stroke="#3e4759" stroke-width="1.700"/><path d="M526.8 1018.6l4.300 4.300" stroke="#3e4759" stroke-width="2.300" stroke-linecap="round" fill="none"/><path d="M513.500 1008h-3v14h3" stroke="#3e4759" stroke-width="1.600" fill="none"/>
<circle cx="553.8" cy="1014.5" r="5.6" fill="none" stroke="#3e4759" stroke-width="1.700"/><path d="M557.8 1018.5l4.300 4.300" stroke="#3e4759" stroke-width="2.300" stroke-linecap="round" fill="none"/><path d="M550.800 1014.500h6M553.800 1011.500v6" stroke="#3e4759" stroke-width="1.200" stroke-dasharray="2 1.500" fill="none"/>
<circle cx="586.5" cy="1014.5" r="5.6" fill="none" stroke="#3e4759" stroke-width="1.700"/><path d="M590.5 1018.5l4.300 4.300" stroke="#3e4759" stroke-width="2.300" stroke-linecap="round" fill="none"/><path d="M599.500 1008h3v14h-3" stroke="#3e4759" stroke-width="1.600" fill="none"/>
<circle cx="628.8" cy="1015" r="5.6" fill="none" stroke="#3e4759" stroke-width="1.700"/><path d="M632.8 1019.0l4.300 4.300" stroke="#3e4759" stroke-width="2.300" stroke-linecap="round" fill="none"/><path d="M614.700 1009v12" stroke="#3e4759" stroke-width="1.300" fill="none"/><path d="M612 1011l2.700 3.300 2.700-3.300ZM612 1019l2.700-3.300 2.700 3.300Z" fill="#3e4759"/>
</svg>
</body>
</html>
